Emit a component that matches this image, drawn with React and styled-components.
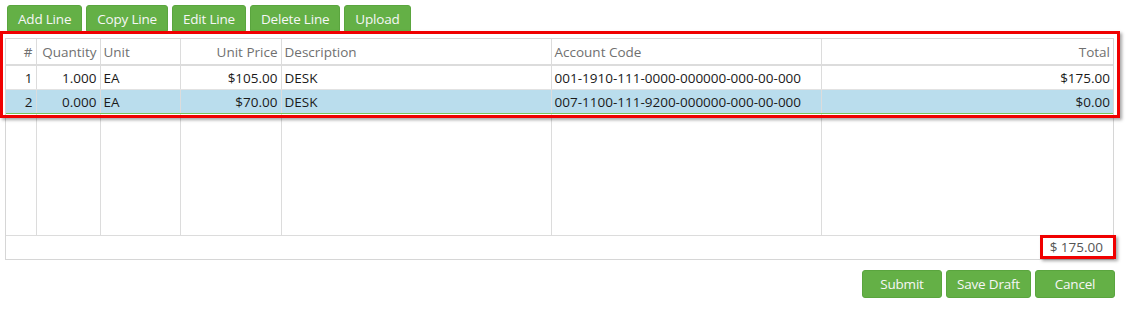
import React from "react";
import styled, { createGlobalStyle } from "styled-components";

const Global = createGlobalStyle`
  html, body { margin: 0; padding: 0; background: #fff; }
  body { font-family: "Open Sans", "Noto Sans", sans-serif; }
`;

const Page = styled.div`
  position: relative;
  width: 1132px;
  height: 312px;
  box-sizing: border-box;
  padding: 5px 18px 0 5px;
`;

const Toolbar = styled.div`
  display: flex;
  gap: 4px;
  margin-left: 2px;
`;

const GreenButton = styled.button`
  height: 28px;
  box-sizing: border-box;
  padding: 0 ${(p) => (p.$wide ? 0 : 10)}px;
  min-width: ${(p) => (p.$wide ? "80px" : "0")};
  border: 1px solid #5aa53e;
  border-radius: 3px;
  background: #64b046;
  color: #f6f6f6;
  font-family: "Open Sans", "Noto Sans", sans-serif;
  font-size: 13.5px;
  letter-spacing: -0.2px;
  line-height: 26px;
  cursor: pointer;
`;

const Grid = styled.div`
  margin-top: 5px;
  border: 1px solid #d6d6d6;
`;

const Table = styled.table`
  width: 100%;
  border-collapse: collapse;
  table-layout: fixed;
  font-size: 13.5px;
  letter-spacing: 0;
`;

const Th = styled.th`
  height: 25px;
  padding: 0 3px;
  font-weight: normal;
  color: #707070;
  text-align: ${(p) => (p.$right ? "right" : "left")};
  border-right: 1px solid #dcdcdc;
  border-bottom: 2px solid #dcdcdc;
  white-space: nowrap;
  overflow: hidden;
  &:last-child { border-right: none; }
`;

const Tr = styled.tr`
  background: ${(p) => (p.$selected ? "#badded" : "#fff")};
  & > td {
    border-bottom: 1px solid ${(p) => (p.$selected ? "#7cc35b" : "#e2e2e2")};
  }
`;

const Td = styled.td`
  height: 23px;
  padding: 0 3px;
  color: #1a1a1a;
  text-align: ${(p) => (p.$right ? "right" : "left")};
  border-right: 1px solid #dcdcdc;
  white-space: nowrap;
  overflow: hidden;
  &:last-child { border-right: none; }
`;

const FillerRow = styled.tr`
  height: 121px;
  & > td {
    border-right: 1px solid #dcdcdc;
    padding: 0;
  }
  & > td:last-child { border-right: none; }
`;

const Footer = styled.div`
  height: 23px;
  border-top: 1px solid #dcdcdc;
  display: flex;
  align-items: center;
  justify-content: flex-end;
  padding-right: 10px;
  font-size: 13.5px;
  color: #555;
`;

const Actions = styled.div`
  display: flex;
  justify-content: flex-end;
  gap: 4px;
  margin-top: 10px;
  margin-right: -1px;
`;

const Annotation = styled.div`
  position: absolute;
  border: 3px solid #f00000;
  box-shadow: 2px 2px 3px rgba(0, 0, 0, 0.35);
  pointer-events: none;
`;

const columns = [
  { key: "n", label: "#", width: 30, right: true },
  { key: "qty", label: "Quantity", width: 64, right: true },
  { key: "unit", label: "Unit", width: 80 },
  { key: "price", label: "Unit Price", width: 101, right: true },
  { key: "desc", label: "Description", width: 270 },
  { key: "acct", label: "Account Code", width: 270 },
  { key: "total", label: "Total", right: true },
];

const rows = [
  { n: "1", qty: "1.000", unit: "EA", price: "$105.00", desc: "DESK", acct: "001-1910-111-0000-000000-000-00-000", total: "$175.00" },
  { n: "2", qty: "0.000", unit: "EA", price: "$70.00", desc: "DESK", acct: "007-1100-111-9200-000000-000-00-000", total: "$0.00", selected: true },
];

export default function App() {
  return (
    <>
      <Global />
      <Page>
        <Toolbar>
          {["Add Line", "Copy Line", "Edit Line", "Delete Line", "Upload"].map((t) => (
            <GreenButton key={t}>{t}</GreenButton>
          ))}
        </Toolbar>
        <Grid>
          <Table>
            <colgroup>
              {columns.map((c) => (
                <col key={c.key} style={c.width ? { width: c.width } : undefined} />
              ))}
            </colgroup>
            <thead>
              <tr>
                {columns.map((c) => (
                  <Th key={c.key} $right={c.right}>{c.label}</Th>
                ))}
              </tr>
            </thead>
            <tbody>
              {rows.map((r) => (
                <Tr key={r.n} $selected={r.selected}>
                  {columns.map((c) => (
                    <Td key={c.key} $right={c.right}>{r[c.key]}</Td>
                  ))}
                </Tr>
              ))}
              <FillerRow>
                {columns.map((c) => (
                  <td key={c.key} />
                ))}
              </FillerRow>
            </tbody>
          </Table>
          <Footer>$ 175.00</Footer>
        </Grid>
        <Actions>
          <GreenButton $wide>Submit</GreenButton>
          <GreenButton $wide style={{ minWidth: 85 }}>Save Draft</GreenButton>
          <GreenButton $wide>Cancel</GreenButton>
        </Actions>
        <Annotation style={{ left: 0, top: 31, width: 1114, height: 81 }} />
        <Annotation style={{ left: 1040, top: 235, width: 70, height: 18 }} />
      </Page>
    </>
  );
}
